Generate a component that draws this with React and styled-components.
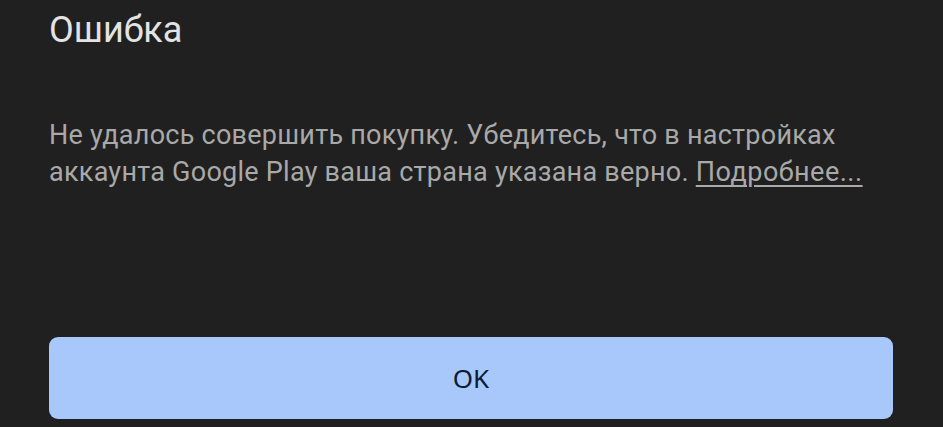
import React from 'react';
import styled, { createGlobalStyle } from 'styled-components';

const GlobalStyle = createGlobalStyle`
  html, body {
    margin: 0;
    padding: 0;
    background: #202020;
  }
  body {
    font-family: Roboto, "Noto Sans", sans-serif;
  }
`;

const Dialog = styled.div`
  box-sizing: border-box;
  width: 943px;
  height: 427px;
  padding: 7px 50px 8px 49px;
  display: flex;
  flex-direction: column;
  background: #202020;
`;

const Title = styled.h2`
  margin: 0;
  font-size: 36px;
  font-weight: 400;
  line-height: 46px;
  color: #e3e3e3;
`;

const Message = styled.p`
  margin: 64px 0 0;
  font-size: 27px;
  letter-spacing: 0.25px;
  line-height: 37px;
  color: #a9a9a9;
`;

const MoreLink = styled.a`
  color: inherit;
  letter-spacing: 0.5px;
  text-decoration: underline;
  text-underline-offset: 4px;
  text-decoration-thickness: 2px;
`;

const Actions = styled.div`
  margin-top: auto;
  display: flex;
`;

const OkButton = styled.button`
  flex: 1;
  height: 82px;
  border: none;
  border-radius: 9px;
  background: #a8c7fa;
  color: #0b1d33;
  font-family: "Noto Sans", sans-serif;
  font-size: 26px;
  cursor: pointer;
`;

const App = () => (
  <>
    <GlobalStyle />
    <Dialog>
      <Title>Ошибка</Title>
      <Message>
        Не удалось совершить покупку. Убедитесь, что в настройках аккаунта Google Play ваша
        страна указана верно. <MoreLink href="#">Подробнее...</MoreLink>
      </Message>
      <Actions>
        <OkButton>OK</OkButton>
      </Actions>
    </Dialog>
  </>
);

export default App;
